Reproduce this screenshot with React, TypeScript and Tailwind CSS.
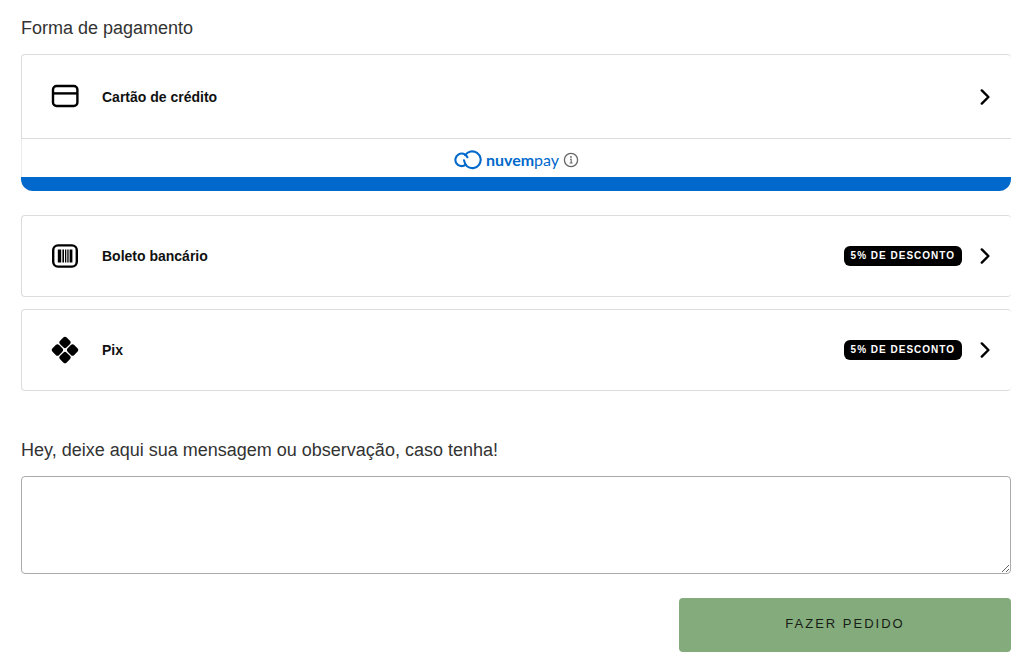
import React, { useState } from "react";
import type { ReactNode } from "react";

const CardIcon = () => (
  <svg className="h-7 w-7" viewBox="0 0 28 28" fill="none" stroke="#000" strokeWidth="2.4">
    <rect x="2" y="3" width="24.4" height="20" rx="3.6" />
    <path d="M2 10.4h24.4" />
  </svg>
);

const BoletoIcon = () => (
  <svg className="h-7 w-7" viewBox="0 0 28 28" fill="none">
    <rect x="2.2" y="3.4" width="23.6" height="21.2" rx="4.8" stroke="#000" strokeWidth="2.4" />
    <path
      d="M6.8 7.4h3.4v13.2H6.8zM11.4 7.4h1.6v13.2h-1.6zM14 7.4h1.3v13.2H14zM16.3 7.4h1.3v13.2h-1.3zM18.6 7.4h2.8v13.2h-2.8z"
      fill="#000"
    />
  </svg>
);

const PixIcon = () => (
  <svg className="h-7 w-7" viewBox="0 0 28 28" fill="#000">
    <g transform="rotate(45 14 14)">
      <rect x="4" y="4" width="9.3" height="9.3" rx="2.4" />
      <rect x="14.7" y="4" width="9.3" height="9.3" rx="2.4" />
      <rect x="4" y="14.7" width="9.3" height="9.3" rx="2.4" />
      <rect x="14.7" y="14.7" width="9.3" height="9.3" rx="2.4" />
    </g>
  </svg>
);

const Chevron = () => (
  <svg className="h-4 w-3" viewBox="0 0 12 16" fill="none" stroke="#000" strokeWidth="2.4">
    <path d="M2.8 1.4l6.6 6.6-6.6 6.6" strokeLinecap="round" strokeLinejoin="round" />
  </svg>
);

const NuvemLogo = () => (
  <svg className="h-5 w-7" viewBox="0 0 28 20" fill="none" stroke="#0069cb" strokeWidth="2.1" strokeLinecap="round">
    <path d="M11.2 5.2A8.4 8.4 0 1 1 13 16.3C11.2 14.6 10.4 12.6 10 10.2" />
    <path d="M13.4 7.2A6.3 6.3 0 1 0 11.6 14.8" />
  </svg>
);

const InfoIcon = () => (
  <svg className="h-4 w-4" viewBox="0 0 16 16" fill="none" stroke="#666" strokeWidth="1.3">
    <circle cx="8" cy="8" r="6.6" />
    <path d="M7 7.2h1.2v3.6M6.6 11h3" strokeWidth="1.1" />
    <circle cx="8" cy="5" r="0.9" fill="#666" stroke="none" />
  </svg>
);

type OptionProps = {
  icon: ReactNode;
  label: string;
  discount?: string;
  attached?: boolean;
  onClick: () => void;
};

const PaymentOption = ({ icon, label, discount, attached, onClick }: OptionProps) => {
  return (
    <button
      type="button"
      onClick={onClick}
      className={`flex w-full cursor-pointer items-center border border-r-0 border-[#dcdcdc] bg-white pr-5 pl-[29px] text-left ${
        attached ? "h-[85px] rounded-t" : "h-[82px] rounded"
      }`}
    >
      {icon}
      <span className="ml-[23px] flex-1 text-sm font-bold text-[#111]">{label}</span>
      {discount && (
        <span className="mr-[17px] rounded-md bg-black px-[7px] text-[10px] leading-5 font-bold tracking-[1px] text-white uppercase">
          {discount}
        </span>
      )}
      <Chevron />
    </button>
  );
};

export default function App() {
  const [, setMethod] = useState("");
  const [message, setMessage] = useState("");

  return (
    <form
      onSubmit={(e) => e.preventDefault()}
      className="bg-white pt-4 pr-[13px] pb-2.5 pl-[21px] font-['Liberation_Sans',Arial,sans-serif]"
    >
      <h2 className="mb-3.5 text-lg leading-6 text-[#333]">Forma de pagamento</h2>

      <PaymentOption icon={<CardIcon />} label="Cartão de crédito" attached onClick={() => setMethod("card")} />
      {/* Nuvempay */}
      <div className="mb-6 overflow-hidden rounded-b-xl">
        <div className="flex h-[38px] items-center justify-center border-l border-[#ececec] pt-1 text-[#0069cb]">
          <NuvemLogo />
          <span className="mr-1 ml-1 font-[Lato,sans-serif] text-base leading-5">
            <b>nuvem</b>pay
          </span>
          <InfoIcon />
        </div>
        <div className="h-3.5 bg-[#0069cb]" />
      </div>

      <div className="flex flex-col gap-3">
        <PaymentOption icon={<BoletoIcon />} label="Boleto bancário" discount="5% de desconto" onClick={() => setMethod("boleto")} />
        <PaymentOption icon={<PixIcon />} label="Pix" discount="5% de desconto" onClick={() => setMethod("pix")} />
      </div>

      <label htmlFor="message" className="mt-[47px] mb-3.5 block text-lg leading-6 text-[#333]">
        Hey, deixe aqui sua mensagem ou observação, caso tenha!
      </label>
      <textarea
        id="message"
        value={message}
        onChange={(e) => setMessage(e.target.value)}
        className="block h-[98px] w-full resize rounded border border-[#aaa] bg-white p-3 text-base outline-none"
      />

      <div className="mt-6 flex justify-end">
        <button
          type="submit"
          className="h-[54px] w-[332px] cursor-pointer rounded bg-[#84ab7b] pb-0.5 text-[13px] tracking-[2px] text-[#182018] uppercase"
        >
          Fazer pedido
        </button>
      </div>
    </form>
  );
}
